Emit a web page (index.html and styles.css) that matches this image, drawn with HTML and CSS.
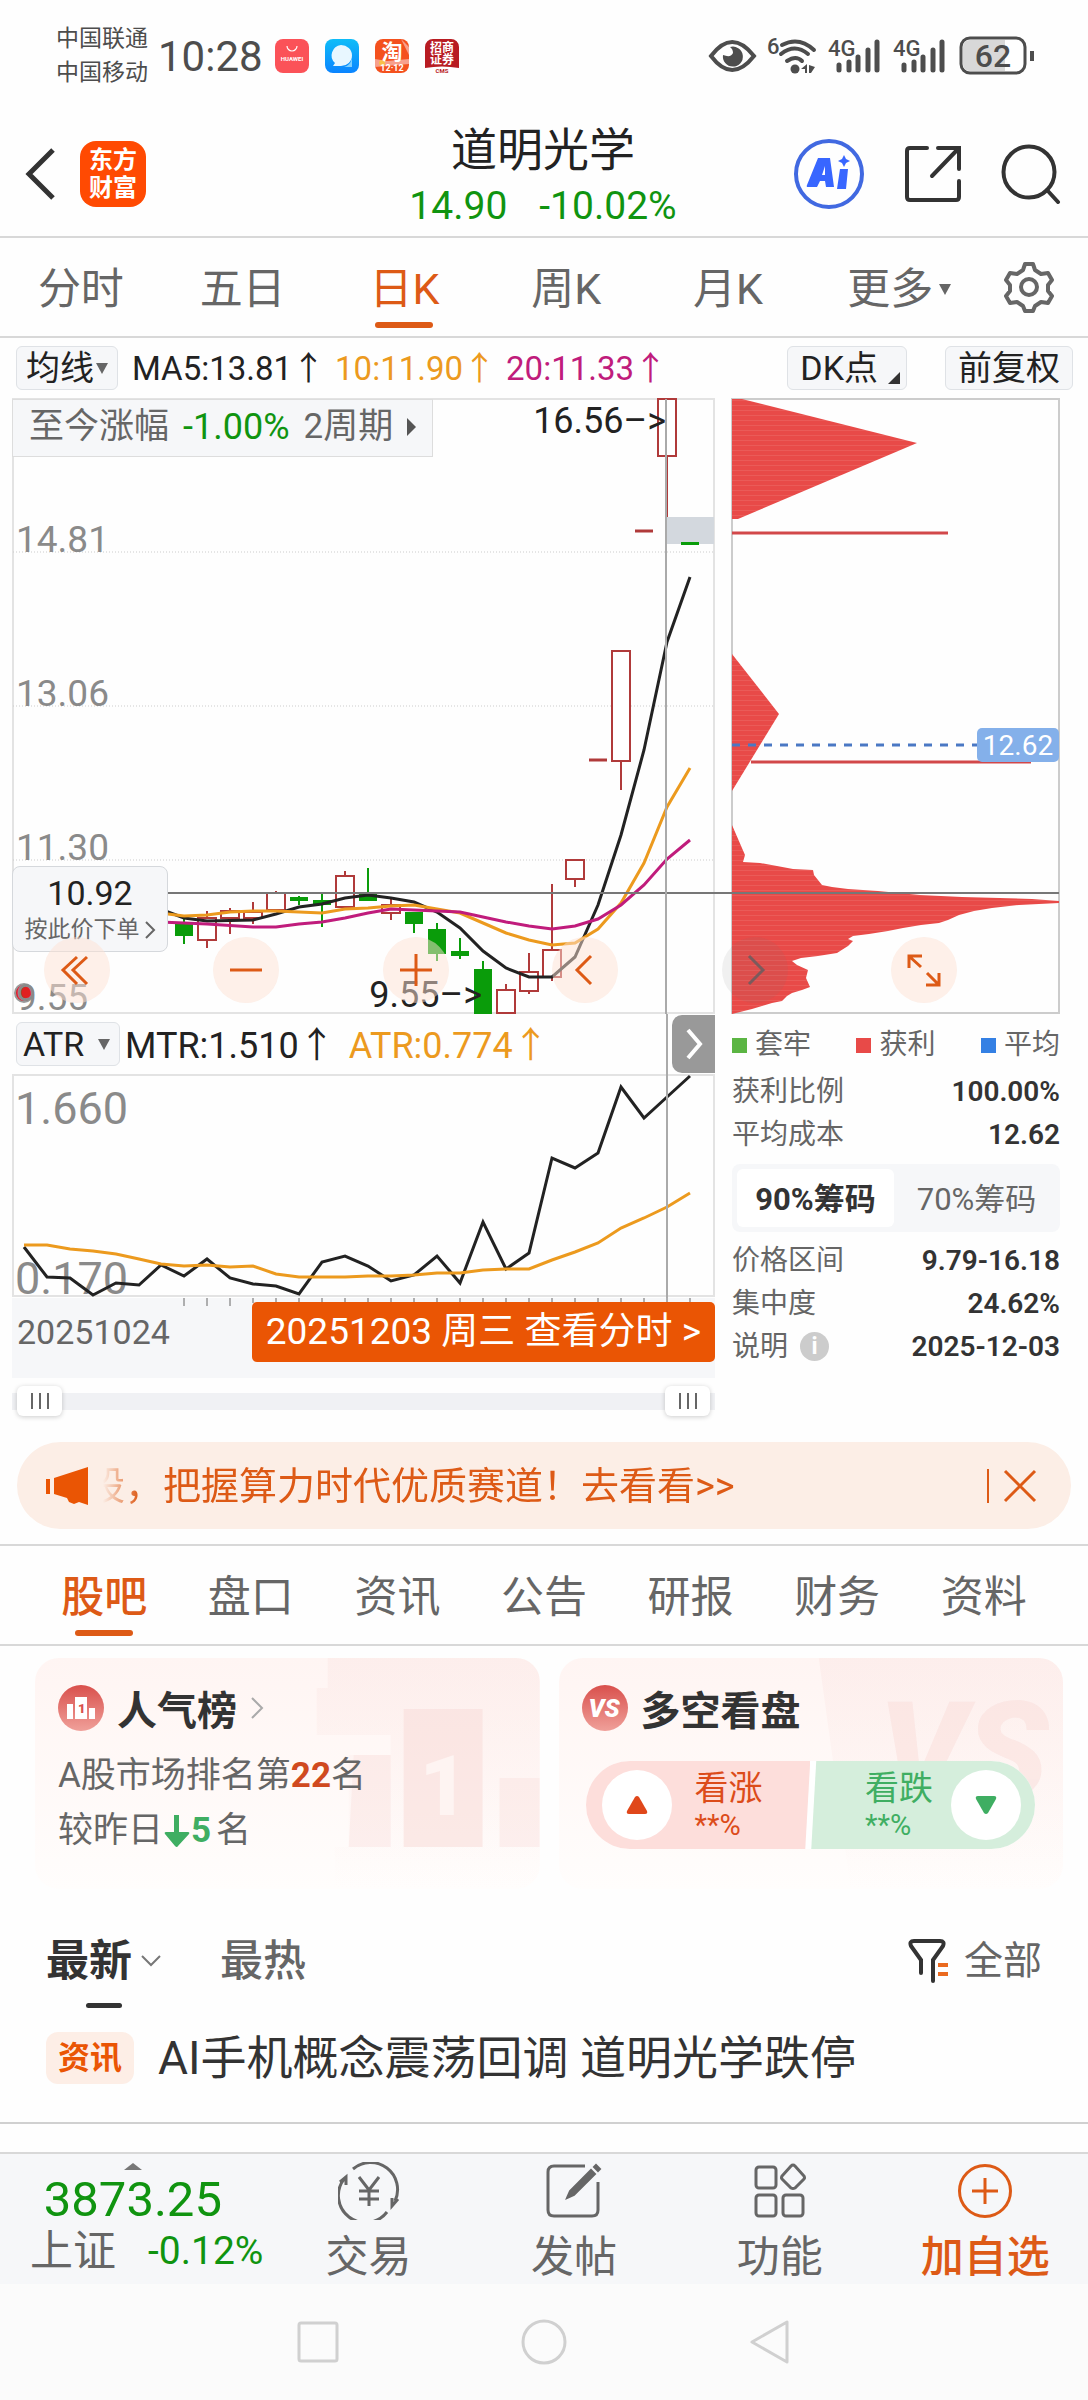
FILE: index.html
```html
<!DOCTYPE html>
<html lang="zh-CN">
<head>
<meta charset="utf-8">
<meta name="viewport" content="width=device-width, initial-scale=1">
<title>道明光学 14.90</title>
<link rel="stylesheet" href="styles.css">
</head>
<body>
<div class="statusbar">
  <div class="carriers"><span>中国联通</span><span>中国移动</span></div>
  <span class="clock">10:28</span>
  <div class="notices">
    <svg class="app" viewBox="0 0 34 34"><rect width="34" height="34" rx="8" fill="#fb5258"/><path d="M12 7a5 5 0 0 0 10 0" fill="none" stroke="#fff" stroke-width="1.2"/><text x="17" y="22" font-size="6" font-weight="700" fill="#fff" text-anchor="middle">HUAWEI</text></svg>
    <svg class="app" viewBox="0 0 34 34"><defs><linearGradient id="msg" x2="0" y2="1"><stop stop-color="#0fbdf8"/><stop offset="1" stop-color="#0a84ff"/></linearGradient></defs><rect width="34" height="34" rx="8" fill="url(#msg)"/><path d="M16 6a11 10.500 0 0 1 0 21H8l2-3A11 10.500 0 0 1 16 6z" fill="#e8f7ff"/><path d="M27 19v9h-8q6-1 8-9z" fill="#7fd0ff"/></svg>
    <svg class="app" viewBox="0 0 34 34"><rect width="34" height="34" rx="8" fill="#f4511e"/><path d="M0 20l12 2 22-2v5l-34 3zM26 0l8 8v8z" fill="#f7a08c"/><circle cx="7" cy="24" r="3" fill="#f8c04a"/><text x="17" y="20" font-size="21" font-weight="700" fill="#fff" text-anchor="middle">淘</text><text x="17" y="32" font-size="9" font-weight="700" fill="#fff" text-anchor="middle">12·12</text></svg>
    <svg class="app" viewBox="0 0 34 34"><path d="M8 0h18a8 8 0 0 1 8 8v21q-17-3-34 0V8a8 8 0 0 1 8-8z" fill="#b81c22"/><text x="17" y="13" font-size="12" font-weight="700" fill="#fff" text-anchor="middle">招商</text><text x="17" y="25" font-size="12" font-weight="700" fill="#fff" text-anchor="middle">证券</text><text x="17" y="34" font-size="6" font-weight="700" fill="#b81c22" text-anchor="middle">CMS</text></svg>
  </div>
  <svg class="signals" viewBox="704 32 336 48" fill="#4d4d4d">
    <path d="M711 56q21-28 43 0q-22 28-43 0z" fill="none" stroke="#4d4d4d" stroke-width="4"/><path d="M730 47a10 10 0 1 1-7 8q8 3 10-2q0-4-3-6z"/>
    <g fill="none" stroke="#4d4d4d" stroke-width="4" stroke-linecap="round"><path d="M782 45q17-9 32 5M781 54q14-11 27 0M787 61q9-6 15 0"/></g>
    <circle cx="795" cy="69" r="4.500"/><path d="M801 69l6-5v9h-2v-4zM809 65l6 2-4 6h-2z"/>
    <text x="767" y="54" font-size="22" font-weight="500">6</text>
    <g id="bars"><text x="828" y="56" font-size="22" font-weight="500">4G</text><g stroke="#4d4d4d" stroke-width="5" stroke-linecap="round"><path d="M839 65v5M849 62v8M858 57v13M868 50v20M877 42v28"/></g></g>
    <use href="#bars" x="65"/>
    <rect x="961" y="38" width="64" height="35" rx="9" fill="#fff" stroke="#4d4d4d" stroke-width="3"/><path d="M970 40h35v31h-35q-7 0-7-7V47q0-7 7-7z" fill="#d8d8d8"/><path d="M1030 51h4v10h-4z"/>
    <text x="993" y="67" font-size="32" font-weight="500" text-anchor="middle">62</text>
  </svg>
</div>

<header class="header">
  <div class="header-side">
    <button class="plain" aria-label="返回"><svg width="32" height="56" viewBox="0 0 32 56"><path d="M28 4L4 28l24 24" fill="none" stroke="#333" stroke-width="5"/></svg></button>
    <a class="logo" href="#"><span>东方</span><span>财富</span></a>
  </div>
  <div class="stock">
    <h1>道明光学</h1>
    <p><span>14.90</span><span>-10.02%</span></p>
  </div>
  <div class="header-side header-tools">
    <button class="plain" aria-label="AI"><svg width="72" height="72" viewBox="0 0 72 72"><circle cx="36" cy="36" r="33" fill="none" stroke="#4169e1" stroke-width="4"/><path fill="#3866ff" fill-rule="evenodd" d="M25 20h12l4 29h-8l-1-6h-5l-3 6h-9q-2 0-1-2zM32 28l-3 9h3zM47 31h8l-2 20h-9zM51 17l2 4 4 2-4 2-2 4-2-4-4-2 4-2z"/></svg></button>
    <button class="plain" aria-label="分享"><svg width="60" height="60" viewBox="0 0 60 60"><path d="M24 4H7q-3 0-3 3v46q0 3 3 3h46q3 0 3-3V37M35 4h21v21M55 5L29 32" fill="none" stroke="#333" stroke-width="4" stroke-linecap="round"/></svg></button>
    <button class="plain" aria-label="搜索"><svg width="60" height="60" viewBox="0 0 60 60"><circle cx="28" cy="28" r="25.500" fill="none" stroke="#333" stroke-width="4"/><path d="M46 46l11 12" stroke="#333" stroke-width="4" stroke-linecap="round"/></svg></button>
  </div>
</header>

<nav class="periods">
  <a href="#">分时</a><a href="#">五日</a><a href="#" class="on">日K</a><a href="#">周K</a><a href="#">月K</a>
  <a href="#">更多<i class="caret"></i></a>
  <button class="plain" aria-label="设置"><svg width="52" height="52" viewBox="0 0 52 52" fill="none" stroke="#666" stroke-width="4" stroke-linejoin="round"><path d="M22 3h8l2 6 6 4 7-1 4 7-4 5v6l4 5-4 7-7-1-6 4-2 5h-8l-2-5-6-4-7 1-4-7 4-5v-6l-4-5 4-7 7 1 6-4z"/><circle cx="26" cy="26" r="8"/></svg></button>
</nav>

<section class="averages">
  <button class="chip chip-tight">均线<i class="caret"></i></button>
  <span>MA5:13.81↑</span><span class="amber">10:11.90↑</span><span class="magenta">20:11.33↑</span>
  <button class="chip chip-dk">DK点<i class="corner"></i></button>
  <button class="chip">前复权</button>
</section>

<section class="price-chart">
  <svg class="plot" viewBox="0 398 1088 616" font-size="37">
    <defs><pattern id="grain" width="8" height="5" patternUnits="userSpaceOnUse"><rect width="8" height="5" fill="#e84a48"/><rect width="8" height="1" fill="#ea5b58"/></pattern></defs>
    <g fill="none" stroke="#e3e3e3" stroke-width="2"><rect x="13" y="399" width="701" height="614"/></g>
    <path d="M13 552h701M13 706h701M13 860h701" stroke="#ccc" stroke-dasharray="1 2"/>
    <circle cx="24" cy="993" r="9" fill="#e02020" stroke="#999" stroke-width="2"/>
    <g fill="#8a8a8a"><text x="16" y="552">14.81</text><text x="16" y="706">13.06</text><text x="16" y="860">11.30</text><text x="16" y="1010">9.55</text></g>
    <rect x="667" y="517" width="47" height="27" fill="#d3d8de"/>
    <g fill="#fff" stroke="#b03a3a" stroke-width="2">
      <path d="M667 456v61M621 761v29M575 879v8M552 884v66M552 977v4M529 953v19M529 991v3M506 984v6M391 899v6M391 913v7M345 871v5M276 891v2M253 902v10M253 918v6M230 908v3M230 918v16M207 911v7M207 940v8"/>
      <path d="M658 399h18v57h-18zM612 651h18v110h-18zM566 860h18v19h-18zM543 950h18v27h-18zM520 972h18v19h-18zM497 990h18v23h-18zM382 905h18v8h-18zM336 876h18v31h-18zM267 893h18v17h-18zM244 912h18v6h-18zM221 911h18v7h-18zM198 918h18v22h-18z"/>
      <path d="M635 531h18M589 760h18" stroke-width="3"/>
    </g>
    <g fill="#0a9c0a" stroke="#0a9c0a" stroke-width="2">
      <path d="M483 961v9M460 938v21M437 923v38M414 912v21M368 868v33M322 892v35M299 896v9M184 918v26"/>
      <path stroke="none" d="M474 969h18v45h-18zM451 951h18v5h-18zM428 929h18v25h-18zM405 912h18v12h-18zM359 892h18v9h-18zM313 900h18v5h-18zM290 897h18v4h-18zM175 924h18v12h-18zM681 542h18v3h-18z"/>
    </g>
    <g fill="none" stroke-width="3">
      <path stroke="#222" d="M160 909L184 918 207 921 253 920 276 914 299 907 322 904 345 898 368 895 391 898 414 902 437 912 460 928 483 951 506 968 529 977 552 977 575 957 598 905 621 835 644 750 667 642 690 577"/>
      <path stroke="#ec9a1e" d="M160 913L184 916 207 915 230 912 253 911 276 911 299 912 322 913 345 909 368 908 391 906 414 905 437 909 460 913 483 923 506 933 529 940 552 945 575 943 598 929 621 903 644 863 667 807 690 768"/>
      <path stroke="#c01c7c" d="M160 922L184 923 207 924 253 927 276 927 299 924 322 922 345 918 368 913 391 909 414 910 437 911 460 912 483 917 506 922 529 926 552 929 575 926 598 919 621 905 644 885 667 859 690 840"/>
    </g>
    <g fill="#222" font-size="36"><text x="666" y="433" text-anchor="end">16.56–&gt;</text><text x="482" y="1007" text-anchor="end">9.55–&gt;</text></g>

    <path d="M732 399h327v614H732z" fill="none" stroke="#ccc" stroke-width="2"/>
    <g fill="url(#grain)">
      <path d="M732 399h10L917 443 738 519h-6z"/><path d="M732 654l47 60-47 77z"/>
      <path d="M732 825L745 855 743 862 760 863 777 866 793 869 813 870 814 875 822 885 832 887 848 889 878 891 920 895 962 897 1032 899 1059 901 1059 903 1019 905 992 908 974 911 959 915 948 920 939 923 921 925 903 928 888 931 869 934 853 936 848 939 853 941 848 946 837 953 818 956 801 958 792 961 797 965 808 970 806 978 810 987 802 990 792 993 787 996 782 1001 772 1003 762 1006 752 1009 744 1011 732 1014z"/>
    </g>
    <path d="M732 533h216M751 762h280" stroke="#d2484a" stroke-width="3"/>
    <path d="M732 745h245" stroke="#4a78c4" stroke-width="3" stroke-dasharray="8 8"/>
    <rect x="977" y="728" width="82" height="34" rx="5" fill="#84b0ea"/><text x="1018" y="755" font-size="28" fill="#fff" text-anchor="middle">12.62</text>
    <path d="M13 893h1046" stroke="#777" stroke-width="2"/><path d="M666 399v615" stroke="#aaa" stroke-width="2"/>
  </svg>
  <button class="gain-note">至今涨幅 <span class="green">-1.00%</span> 2周期<i class="caret-right"></i></button>
  <button class="price-tag"><b>10.92</b><span>按此价下单<svg width="12" height="20" viewBox="0 0 12 20"><path d="M2 2l8 8-8 8" fill="none" stroke="#666" stroke-width="2"/></svg></span></button>
  <div class="controls">
    <button aria-label="最早"><svg viewBox="0 0 66 66"><path d="M33 20L19 33l14 14M43 20L29 33l14 14"/></svg></button>
    <button aria-label="缩小"><svg viewBox="0 0 66 66"><path d="M17 33h32"/></svg></button>
    <button aria-label="放大"><svg viewBox="0 0 66 66"><path d="M17 33h32M33 17v32"/></svg></button>
    <button aria-label="向左"><svg viewBox="0 0 66 66"><path d="M39 19L25 33l14 14"/></svg></button>
    <button aria-label="向右" class="dim"><svg viewBox="0 0 66 66"><path d="M27 19l14 14-14 14"/></svg></button>
    <button aria-label="全屏"><svg viewBox="0 0 66 66"><path d="M18 31V19h13M19 20l11 10M48 36v12H35M47 47L36 36"/></svg></button>
  </div>
</section>

<div class="details">
  <section class="indicator">
    <div class="indicator-main">
      <div class="indicator-head">
        <button class="chip chip-atr">ATR<i class="caret"></i></button>
        <span>MTR:1.510↑</span><span class="amber">ATR:0.774↑</span>
        <button class="fold" aria-label="收起"><svg width="20" height="34" viewBox="0 0 20 34"><path d="M4 3l12 14L4 31" fill="none" stroke="#fff" stroke-width="4"/></svg></button>
      </div>
      <svg class="plot" viewBox="12 1074 703 304">
        <rect x="12" y="1298" width="703" height="80" fill="#f6f7f9"/>
        <rect x="13" y="1075" width="701" height="221" fill="none" stroke="#e3e3e3" stroke-width="2"/>
        <g fill="#8a8a8a" font-size="45"><text x="15" y="1124">1.660</text><text x="15" y="1294">0.170</text></g>
        <path d="M184 1298v8M207 1298v8M230 1298v8M253 1298v5M276 1298v5M299 1298v5M322 1298v5M345 1298v5M368 1298v5M391 1298v5M414 1298v5M437 1298v5M460 1298v5M483 1298v5M506 1298v5M529 1298v5M552 1298v5M575 1298v5M598 1298v5M621 1298v5M644 1298v5M667 1298v5M690 1298v5" stroke="#666"/>
        <g fill="none" stroke-width="3">
          <path stroke="#222" d="M24 1247L47 1277 70 1278 93 1295 116 1283 139 1285 161 1265 184 1276 207 1259 230 1278 253 1284 276 1286 299 1294 322 1262 345 1256 368 1266 391 1281 414 1275 437 1256 460 1283 483 1222 506 1269 529 1253 552 1158 575 1168 598 1153 621 1087 644 1118 667 1097 690 1076"/>
          <path stroke="#ec9a1e" d="M24 1245L47 1245 70 1249 93 1251 116 1254 139 1259 161 1264 184 1266 207 1265 230 1267 253 1266 276 1274 299 1277 322 1277 345 1277 368 1276 391 1276 414 1275 437 1273 460 1273 483 1270 506 1269 529 1269 552 1260 575 1252 598 1243 621 1228 644 1218 667 1207 690 1193"/>
        </g>
        <text x="17" y="1344" font-size="34" fill="#666">20251024</text>
      </svg>
      <a class="day-link" href="#">20251203 周三 查看分时 &gt;</a>
    </div>
    <div class="range">
      <input type="range" aria-label="起始日期" min="0" max="100" value="0">
      <input type="range" aria-label="结束日期" min="0" max="100" value="100">
    </div>
  </section>

  <section class="chips">
    <ul class="legend"><li class="k-green">套牢</li><li class="k-red">获利</li><li class="k-blue">平均</li></ul>
    <dl><div><dt>获利比例</dt><dd>100.00%</dd></div><div><dt>平均成本</dt><dd>12.62</dd></div></dl>
    <div class="segment"><button class="on">90%筹码</button><button>70%筹码</button></div>
    <dl><div><dt>价格区间</dt><dd>9.79-16.18</dd></div><div><dt>集中度</dt><dd>24.62%</dd></div><div><dt>说明<i class="info">i</i></dt><dd>2025-12-03</dd></div></dl>
  </section>
</div>

<aside class="banner">
  <svg width="46" height="40" viewBox="0 0 46 40" fill="#ea5504"><path d="M1 13h4v15H1zM9 12L43 1v38l-9-3-5 2-5-2-2-4-13-4z"/></svg>
  <a class="ticker" href="#">股，把握算力时代优质赛道！去看看&gt;&gt;</a>
  <button class="plain close" aria-label="关闭"><svg width="34" height="34" viewBox="0 0 34 34"><path d="M2 2l30 30M32 2L2 32" stroke="#dd5a16" stroke-width="3"/></svg></button>
</aside>

<nav class="topics">
  <a href="#" class="on">股吧</a><a href="#">盘口</a><a href="#">资讯</a><a href="#">公告</a><a href="#">研报</a><a href="#">财务</a><a href="#">资料</a>
</nav>

<div class="cards">
  <section class="card">
    <svg class="mark" viewBox="0 0 505 231" fill="#f9dedb"><defs><linearGradient id="fade" x2="0" y2="1"><stop stop-color="#f9dedb" stop-opacity=".3"/><stop offset="1" stop-color="#f9dedb" stop-opacity="0"/></linearGradient></defs><path d="M293 0h212v231H300v-42h14V97h42v-20h-74v-47h11z" fill="url(#fade)"/><path d="M369 51h79v138h-79z" opacity=".6"/><path d="M319 97h37v92h-42zM465 120h40v69h-40z" opacity=".4"/><text x="385" y="157" font-size="84" font-weight="900" fill="#fef4f2">1</text></svg>
    <h2><svg width="46" height="46" viewBox="0 0 46 46"><defs><linearGradient id="badge" x2="0" y2="1"><stop stop-color="#d9504c"/><stop offset="1" stop-color="#f0a09a"/></linearGradient></defs><circle cx="23" cy="23" r="23" fill="url(#badge)"/><path d="M9 19h6v15H9zM17 12h12v22H17zM31 23h6v11h-6z" fill="#fff"/><text x="20" y="28" font-size="13" font-weight="900" fill="#d9504c">1</text></svg>人气榜<svg width="14" height="24" viewBox="0 0 14 24"><path d="M2 2l10 10L2 22" fill="none" stroke="#aaa" stroke-width="2"/></svg></h2>
    <p>A股市场排名第<b class="up">22</b>名</p>
    <p>较昨日<svg class="drop" width="26" height="34" viewBox="0 0 26 34" fill="#3fae62"><path d="M10 1h5v17h9q2 0 1 2L14 32q-1 2-3 0L1 20q-1-2 1-2h8z"/></svg><b class="down">5</b><span class="rank-unit">名</span></p>
  </section>
  <section class="card">
    <svg class="mark" viewBox="0 0 505 231" fill="#f9dedb"><path d="M260 0h220q25 0 25 25v206H292z" fill="url(#fade)"/><text x="320" y="140" font-size="136" font-weight="900" font-style="italic" opacity=".55">VS</text></svg>
    <h2><svg width="46" height="46" viewBox="0 0 46 46"><circle cx="23" cy="23" r="23" fill="url(#badge)"/><text x="22" y="32" font-size="25" font-weight="900" font-style="italic" fill="#fff" text-anchor="middle">VS</text></svg>多空看盘</h2>
    <div class="votes">
      <button class="bull"><i><svg width="24" height="20" viewBox="0 0 24 20"><path d="M10 2q2-2 4 0l8 14q1 3-2 3H4q-3 0-2-3z" fill="#e0471a"/></svg></i><span>看涨<small>**%</small></span></button>
      <button class="bear"><span>看跌<small>**%</small></span><i><svg width="24" height="20" viewBox="0 0 24 20"><path d="M10 18q2 2 4 0l8-14q1-3-2-3H4Q1 1 2 4z" fill="#3fae62"/></svg></i></button>
    </div>
  </section>
</div>

<div class="feed-bar">
  <a href="#" class="on">最新<svg width="22" height="14" viewBox="0 0 22 14"><path d="M2 2l9 9 9-9" fill="none" stroke="#777" stroke-width="2"/></svg></a>
  <a href="#">最热</a>
  <button class="plain filter"><svg width="42" height="46" viewBox="0 0 42 46"><path d="M13 35V22L3 8q-2-5 3-5h26q5 0 3 5L25 22v21" fill="none" stroke="#333" stroke-width="4" stroke-linecap="round"/><path d="M30 27h10M30 36h10" stroke="#ea6a20" stroke-width="4"/></svg>全部</button>
</div>
<article class="news"><span class="tag">资讯</span><a href="#">AI手机概念震荡回调 道明光学跌停</a></article>

<footer class="dock">
  <a class="index" href="#"><i class="caret-up"></i><b>3873.25</b><span>上证<em>-0.12%</em></span></a>
  <a href="#"><svg width="62" height="58" viewBox="0 0 62 58" fill="none" stroke="#666" stroke-width="3"><path d="M15 7a27 27 0 0 1 42 32M49 50A27 27 0 0 1 6 17M2 20l6-5v8M60 37l-6 7v-8M21 15l10 13 10-13M31 28v16M21 29h20M21 37h20"/></svg>交易</a>
  <a href="#"><svg width="58" height="58" viewBox="0 0 58 58" fill="none" stroke="#666" stroke-width="3"><path d="M40 4H9q-6 0-6 6v38q0 6 6 6h38q6 0 6-6V20"/><path d="M22 36l3-7L46 8l4 4-21 21zM49 5l2-2 4 4-2 2z" fill="#666" stroke-width="2"/></svg>发帖</a>
  <a href="#"><svg width="58" height="58" viewBox="0 0 58 58" fill="none" stroke="#666" stroke-width="3"><rect x="5" y="5" width="20" height="21" rx="3"/><rect x="5" y="33" width="20" height="21" rx="3"/><rect x="32" y="33" width="20" height="21" rx="3"/><path d="M42 3q1 0 2 1l9 10q1 2 0 3l-9 9q-2 1-4 0l-9-9q-1-1 0-3l9-10q1-1 2-1z"/></svg>功能</a>
  <a href="#" class="add"><svg width="58" height="58" viewBox="0 0 58 58" fill="none" stroke="#dd5a16" stroke-width="3"><circle cx="29" cy="29" r="25.500"/><path d="M16 29h26M29 16v26"/></svg>加自选</a>
</footer>
<nav class="system">
  <button class="plain" aria-label="最近任务"><svg width="46" height="46" viewBox="0 0 46 46"><rect x="4" y="4" width="38" height="38" rx="2"/></svg></button>
  <button class="plain" aria-label="主屏幕"><svg width="46" height="46" viewBox="0 0 46 46"><circle cx="23" cy="23" r="21"/></svg></button>
  <button class="plain" aria-label="返回"><svg width="46" height="46" viewBox="0 0 46 46"><path d="M40 3v40L5 23z" stroke-linejoin="round"/></svg></button>
</nav>
</body>
</html>
```
FILE: styles.css
```css
* { box-sizing: border-box; }
body {
  margin: 0;
  background: #fefefe;
  color: #222;
  font-family: Roboto, "Noto Sans CJK SC", sans-serif;
}
h1, h2, p, ul, dl, dd { margin: 0; padding: 0; font-weight: 400; }
ul { list-style: none; }
i, em { font-style: normal; }
a { color: inherit; text-decoration: none; }
button { font: inherit; color: inherit; border: 0; padding: 0; cursor: pointer; }
svg { display: block; flex: none; }
.plain { background: none; display: flex; align-items: center; }
.amber { color: #ec9a1e; }
.magenta { color: #c01c7c; }
.green { color: #109410; }

.caret { border: 6px solid transparent; border-top: 11px solid #666; border-bottom: 0; }

/* status bar */
.statusbar { display: flex; align-items: center; height: 112px; padding: 0 48px 0 56px; color: #4d4d4d; }
.carriers { display: grid; font-size: 23px; line-height: 34px; }
.clock { margin-left: 10px; font-size: 42px; }
.notices { display: flex; gap: 16px; margin-left: 12px; }
.app { width: 34px; height: 34px; }
.signals { width: 336px; height: 48px; margin-left: auto; }

/* header */
.header { display: grid; grid-template-columns: 1fr auto 1fr; align-items: center; height: 126px; border-bottom: 2px solid #d8d8d8; padding: 0 27px 0 25px; }
.header-side { display: flex; align-items: center; gap: 23px; }
.header-tools { justify-content: flex-end; gap: 38px; }
.logo { display: grid; align-content: center; justify-items: center; width: 66px; height: 66px; border-radius: 16px; background: #ff4a02; color: #fff; font-size: 24px; font-weight: 700; line-height: 28px; }
.stock { text-align: center; padding-top: 8px; }
.stock h1 { font-size: 46px; line-height: 56px; }
.stock p { display: flex; gap: 32px; font-size: 39px; line-height: 56px; color: #109410; }

/* tab rows */
.periods, .topics { display: grid; height: 100px; border-bottom: 2px solid #d8d8d8; font-size: 43px; line-height: 60px; color: #666; }
.periods { grid-template-columns: repeat(5, 161fr) 180fr 78fr; padding-right: 20px; }
.topics { grid-template-columns: repeat(7, 1fr); padding: 0 31px; }
.periods a, .topics a { position: relative; display: flex; justify-content: center; align-items: center; gap: 6px; padding-top: 4px; }
.periods .on, .topics .on { color: #dd5a16; }
.topics .on { font-weight: 500; }
.periods .on::after, .topics .on::after { content: ""; position: absolute; bottom: 8px; left: calc(50% - 29px); width: 58px; height: 6px; border-radius: 3px; background: #dd5a16; }
.periods .plain { justify-content: center; }

/* moving averages */
.averages { display: flex; align-items: center; height: 60px; padding: 0 15px 0 16px; font-size: 33px; }
.averages span { margin-right: 10px; padding-bottom: 4px; }
.chip { display: flex; align-items: center; gap: 2px; height: 44px; padding: 0 12px; border: 1px solid #dfe2e6; border-radius: 6px; background: #f6f7f9; font-size: 34px; line-height: 40px; }
.averages .chip-tight { margin-right: 14px; padding: 0 9px; }
.chip-dk { margin-left: auto; margin-right: 38px; gap: 10px; padding: 0 6px 0 12px; }
.corner { align-self: flex-end; margin-bottom: 5px; border-left: 12px solid transparent; border-bottom: 12px solid #333; }

/* price chart and the controls over it */
.price-chart { position: relative; }
.plot { width: 100%; height: auto; }
.gain-note { position: absolute; top: 1px; left: 12px; display: flex; align-items: center; gap: 14px; height: 58px; padding: 0 16px 2px; border: 1px solid #ddd; background: #f6f7f9; color: #666; font-size: 35px; line-height: 52px; }
.gain-note .green { font-size: 36px; }
.caret-right { border: 9px solid transparent; border-left: 9px solid #555; border-right: 0; }
.price-tag { position: absolute; top: 76%; left: 12px; width: 156px; height: 86px; border: 1px solid #d5d8dc; border-radius: 8px; background: #f6f7f9; }
.price-tag b { display: block; font-size: 34px; font-weight: 400; line-height: 42px; }
.price-tag span { display: flex; justify-content: center; align-items: center; gap: 4px; font-size: 23px; line-height: 32px; color: #666; }
.controls { position: absolute; bottom: 11px; left: 4%; right: 12%; display: flex; justify-content: space-between; }
.controls button { width: 66px; height: 66px; border-radius: 50%; background: rgba(253, 226, 212, .5); }
.controls .dim { background: rgba(120, 120, 120, .1); }
.controls path { fill: none; stroke: #dd5a16; stroke-width: 3; }
.controls .dim path { stroke: #7a5a5c; }

/* indicator pane and chip statistics */
.details { display: grid; grid-template-columns: 703fr 328fr; column-gap: 17px; padding: 0 28px 18px 12px; }
.indicator-main { position: relative; }
.indicator-main::after { content: ""; position: absolute; top: 0; bottom: 80px; left: 93%; width: 2px; background: #aaa; }
.indicator-head { display: flex; align-items: center; height: 60px; padding-left: 4px; font-size: 36px; }
.indicator-head span { margin-right: 14px; padding-bottom: 4px; }
.chip-atr { width: 104px; margin-right: 5px; padding: 0 9px 0 6px; justify-content: space-between; }
.fold { display: flex; align-items: center; justify-content: center; width: 43px; height: 58px; margin-left: auto; border-radius: 10px 0 0 10px; background: #999; }
.day-link { position: absolute; right: 0; bottom: 16px; z-index: 1; padding: 0 14px; border-radius: 5px; background: #ea5504; color: #fff; font-size: 37px; line-height: 60px; white-space: nowrap; }
.range { display: grid; align-items: center; height: 46px; background: linear-gradient(#f0f1f4, #f0f1f4) center / 100% 17px no-repeat; }
.range input { grid-area: 1 / 1; appearance: none; width: auto; height: 30px; margin: 0 5px; background: none; pointer-events: none; }
.range input::-webkit-slider-thumb {
  appearance: none;
  width: 45px;
  height: 30px;
  border-radius: 6px;
  background:
    linear-gradient(#666, #666) 14px 7px / 2px 16px no-repeat,
    linear-gradient(#666, #666) 22px 7px / 2px 16px no-repeat,
    linear-gradient(#666, #666) 30px 7px / 2px 16px no-repeat,
    #fff;
  box-shadow: 0 1px 5px rgba(0, 0, 0, .2);
  pointer-events: auto;
}
.chips { padding-top: 6px; color: #666; font-size: 28px; }
.legend { display: flex; justify-content: space-between; line-height: 50px; }
.legend li { display: flex; align-items: center; gap: 8px; }
.legend li::before { content: ""; width: 15px; height: 15px; background: currentColor; }
.legend .k-green::before { background: #5bb543; }
.legend .k-red::before { background: #e84a48; }
.legend .k-blue::before { background: #3480e4; }
.chips dl div { display: flex; justify-content: space-between; line-height: 43px; }
.chips dt { display: flex; align-items: center; gap: 12px; }
.chips dd { color: #333; font-weight: 600; }
.info { width: 29px; height: 29px; border-radius: 50%; background: #ccc; color: #fff; font-size: 23px; font-weight: 700; line-height: 29px; text-align: center; }
.segment { display: grid; grid-template-columns: 1fr 1fr; gap: 4px; height: 68px; margin: 8px 0 7px; padding: 5px; border-radius: 8px; background: #f6f7f9; font-size: 31px; }
.segment button { padding-bottom: 4px; border-radius: 6px; background: none; white-space: nowrap; }
.segment .on { background: #fff; color: #333; font-weight: 700; }

/* banner */
.banner { display: flex; align-items: center; height: 87px; margin: 0 17px; padding: 0 34px 0 28px; border-radius: 44px; background: #fceee6; color: #dd5a16; }
.ticker { flex: 1; overflow: hidden; margin-left: -4px; font-size: 38px; line-height: 60px; white-space: nowrap; -webkit-mask: linear-gradient(to right, transparent 16px, #000 52px); mask: linear-gradient(to right, transparent 16px, #000 52px); }
.close { height: 34px; padding-left: 14px; border-left: 2px solid #dd5a16; }
.topics { margin-top: 15px; height: 102px; border-top: 2px solid #d8d8d8; }

/* cards */
.cards { display: grid; grid-template-columns: 1fr 1fr; gap: 19px; padding: 12px 25px 0 35px; }
.card { position: relative; overflow: hidden; height: 231px; padding: 20px 28px 0 23px; border-radius: 24px; background: linear-gradient(#fff5f3, #fffdfc); color: #666; font-size: 35px; }
.mark { position: absolute; top: 0; right: 0; width: 100%; height: 100%; }
.card h2 { position: relative; display: flex; align-items: center; gap: 13px; height: 60px; color: #333; font-size: 40px; font-weight: 700; }
.card p { position: relative; display: flex; align-items: center; line-height: 55px; }
.card h2 + p { margin-top: 10px; }
.card b { font-weight: 700; }
.up { color: #d04a20; }
.down { color: #3fae62; }
.rank-unit { margin-left: 5px; }
.drop { margin: 0 1px; }
.votes { position: relative; display: grid; grid-template-columns: 1fr 1fr; height: 88px; margin: 23px 0 0 4px; border-radius: 44px; overflow: hidden; background: #fff; }
.votes button { display: flex; align-items: center; gap: 23px; padding: 0 14px 0 16px; text-align: left; }
.votes i { display: flex; align-items: center; justify-content: center; width: 70px; height: 70px; border-radius: 50%; background: #fff; }
.votes span { font-size: 34px; line-height: 40px; }
.votes small { display: block; font-size: 29px; line-height: 34px; }
.bull { background: #fddedb; color: #dc4c1a; clip-path: polygon(0 0, 100% 0, calc(100% - 5px) 100%, 0 100%); }
.votes .bear { gap: 18px; justify-content: flex-end; background: #d5eedc; color: #3fae62; clip-path: polygon(6px 0, 100% 0, 100% 100%, 1px 100%); }

/* feed */
.feed-bar { display: flex; align-items: center; height: 121px; padding: 22px 46px 0; color: #666; font-size: 43px; }
.feed-bar a { position: relative; display: flex; align-items: center; gap: 8px; margin-right: 58px; line-height: 60px; font-weight: 500; }
.feed-bar .on { color: #333; font-weight: 700; }
.feed-bar .on::after { content: ""; position: absolute; bottom: -17px; left: calc(50% - 18px); width: 36px; height: 5px; border-radius: 3px; background: #333; }
.filter { margin-left: auto; gap: 14px; font-size: 39px; line-height: 60px; }
.news { display: flex; align-items: center; gap: 24px; height: 114px; padding: 0 46px 16px; border-bottom: 2px solid #d0d0d0; color: #333; font-size: 46px; line-height: 60px; }
.tag { padding: 0 12px; border-radius: 12px; background: #fdeee6; color: #ea5504; font-size: 32px; font-weight: 700; line-height: 52px; }

/* dock */
.dock { display: grid; grid-template-columns: 265fr repeat(4, 205fr); height: 132px; margin-top: 28px; border-top: 2px solid #d8d8d8; background: #f6f7f9; color: #666; font-size: 43px; }
.dock a { display: grid; justify-items: center; align-content: start; padding-top: 8px; line-height: 60px; }
.dock svg { height: 58px; margin-bottom: 7px; }
.dock .add { color: #dd5a16; font-weight: 500; }
.dock .index { padding-top: 9px; }
.caret-up { border: 9px solid transparent; border-bottom: 7px solid #777; border-top: 0; }
.index b { font-size: 49px; font-weight: 400; line-height: 60px; color: #109410; }
.index span { justify-self: start; display: flex; align-items: center; gap: 32px; padding-left: 30px; line-height: 42px; }
.index em { font-size: 39px; color: #109410; }

.system { display: flex; justify-content: center; gap: 180px; padding: 35px 0; background: #fbfbfb; }
.system svg { fill: none; stroke: #d0d0d0; stroke-width: 3; }
```
